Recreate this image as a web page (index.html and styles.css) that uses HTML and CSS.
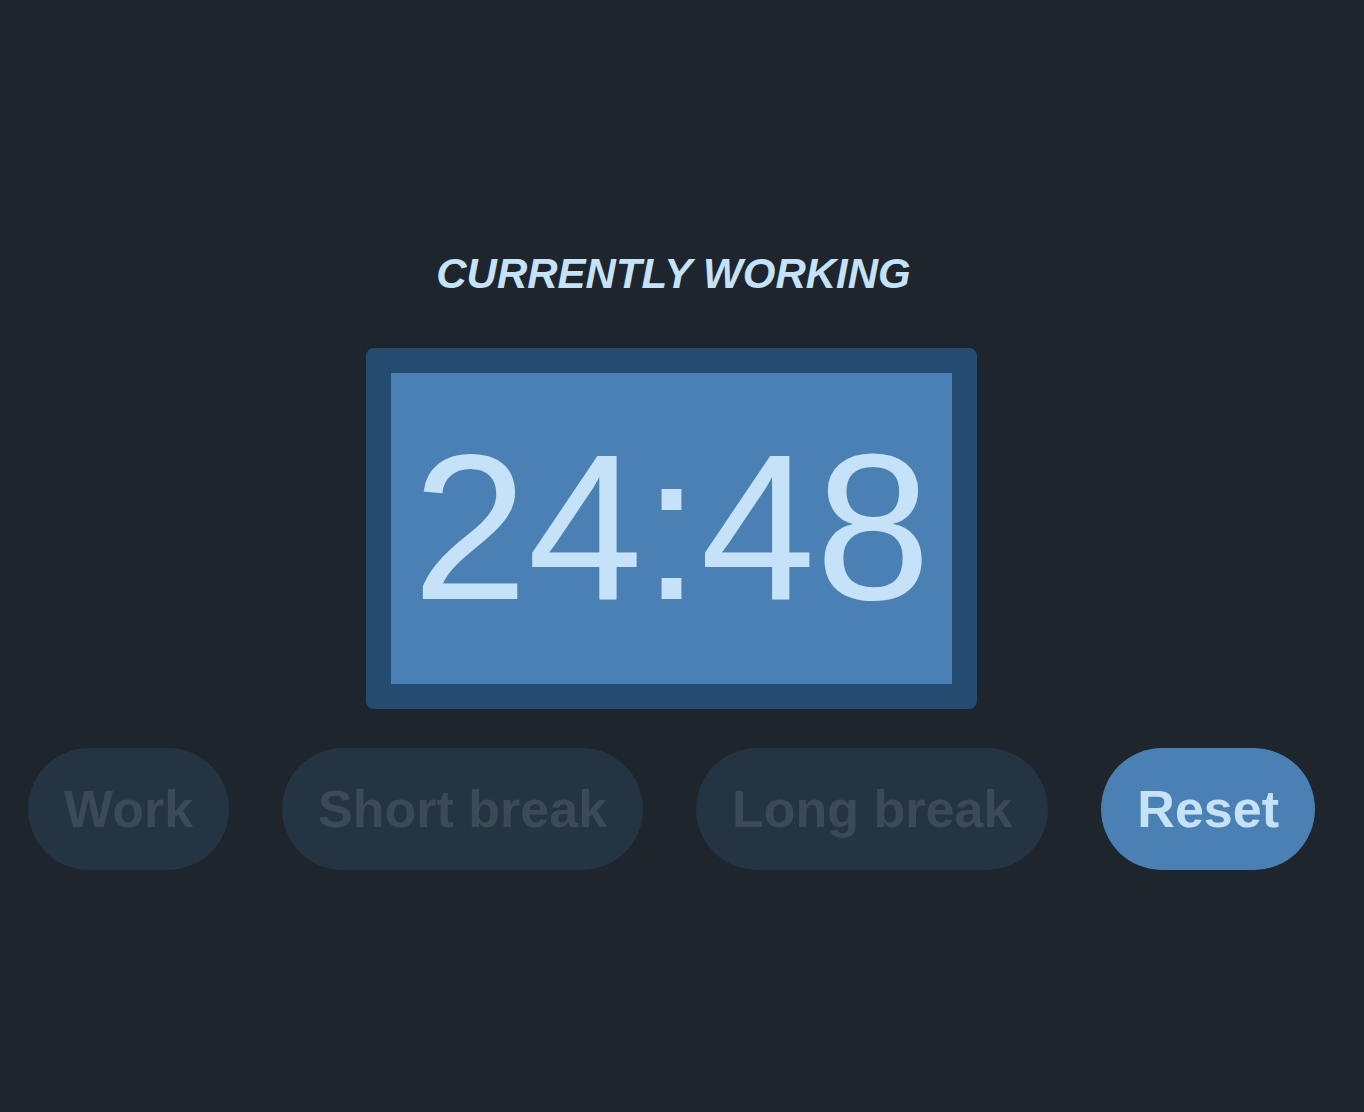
FILE: index.html
```html
<!DOCTYPE html>
<html lang="en">
<head>
<meta charset="utf-8">
<title>Pomodoro</title>
<link rel="stylesheet" href="styles.css">
</head>
<body>
<main class="app">
  <h1 class="status">CURRENTLY WORKING</h1>
  <div class="timer">
    <div class="timer-face">24:48</div>
  </div>
  <div class="controls">
    <button class="btn btn-muted">Work</button>
    <button class="btn btn-muted">Short break</button>
    <button class="btn btn-muted">Long break</button>
    <button class="btn btn-primary">Reset</button>
  </div>
</main>
</body>
</html>
```

FILE: styles.css
```css
html, body {
  margin: 0;
  padding: 0;
  background: #1e252c;
  height: 100%;
}
body {
  font-family: "Liberation Sans", Arial, sans-serif;
}
.app {
  display: flex;
  flex-direction: column;
  align-items: center;
  padding: 250px 21px 0 0;
}
.status {
  margin: 0 0 50px 4px;
  font-size: 42px;
  font-weight: 700;
  font-style: italic;
  color: #c5e2f8;
  line-height: 48px;
}
.timer {
  border: 25px solid #244c71;
  border-radius: 8px;
  background: #4a80b3;
  margin-bottom: 39px;
}
.timer-face {
  font-size: 207px;
  line-height: 238px;
  color: #c5e2f8;
  padding: 36px 21.5px 37px;
  width: 518px;
  text-align: center;
}
.controls {
  display: flex;
  gap: 53px;
}
.btn {
  font-family: "Liberation Sans", Arial, sans-serif;
  font-size: 52px;
  font-weight: 700;
  line-height: 60px;
  padding: 31px 36px;
  border: none;
  border-radius: 61px;
  cursor: pointer;
}
.btn-muted {
  background: #243443;
  color: #3c4a56;
}
.btn-primary {
  background: #4a80b3;
  color: #c5e2f8;
}
```
